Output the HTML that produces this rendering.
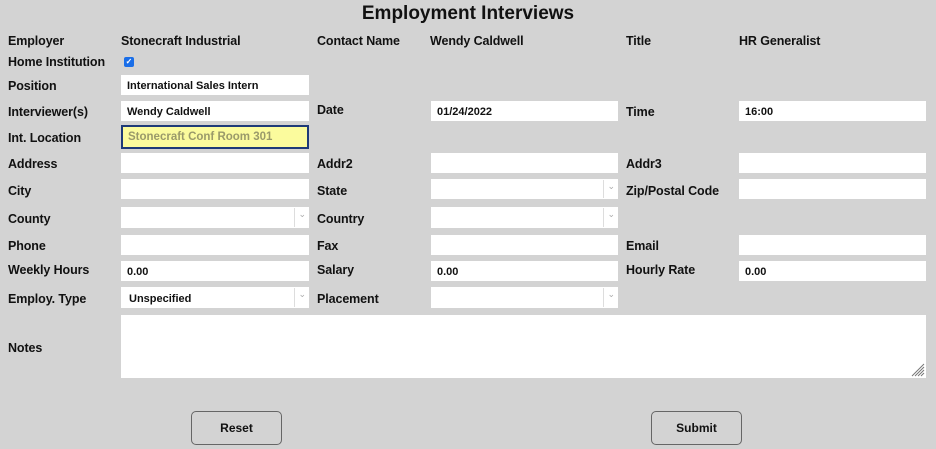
<!DOCTYPE html>
<html><head><meta charset="utf-8"><style>
*{box-sizing:border-box;margin:0;padding:0}
body{width:936px;height:449px;background:#d3d3d3;font-family:"Liberation Sans",Arial,sans-serif;position:relative;overflow:hidden;color:#111}
.t{position:absolute;left:0;width:936px;text-align:center;top:3px;font-size:19px;font-weight:bold}
.l{position:absolute;font-size:12.5px;font-weight:bold;white-space:nowrap;letter-spacing:-0.1px;margin-top:1px}
.i{position:absolute;background:#fff;height:20px;font-size:11px;font-weight:bold;padding:5px 0 0 6px;white-space:nowrap}
.c1{left:121px;width:188px}.c2{left:431px;width:187px}.c3{left:739px;width:187px}
.s::after{content:"";position:absolute;right:14px;top:1px;bottom:1px;width:1px;background:#ddd}
.s::before{content:"⌄";position:absolute;right:3px;top:2px;font-size:9px;color:#aaa;font-weight:normal}
.b{position:absolute;top:411px;width:91px;height:34px;border:1px solid #666;border-radius:5px;font-size:12px;font-weight:bold;text-align:center;line-height:32px;background:#d3d3d3}
</style></head><body>
<div class="t">Employment Interviews</div>
<div class="l" style="left:8px;top:33px">Employer</div>
<div class="l" style="left:121px;top:33px">Stonecraft Industrial</div>
<div class="l" style="left:317px;top:33px">Contact Name</div>
<div class="l" style="left:430px;top:33px">Wendy Caldwell</div>
<div class="l" style="left:626px;top:33px">Title</div>
<div class="l" style="left:739px;top:33px">HR Generalist</div>
<div class="l" style="left:8px;top:54px">Home Institution</div>
<div style="position:absolute;left:124px;top:57px;width:10px;height:10px;background:#1a6ee8;border-radius:2px;color:#fff;font-size:8px;line-height:10px;text-align:center;font-weight:bold">✓</div>
<div class="l" style="left:8px;top:78px">Position</div>
<div class="i c1" style="top:75px">International Sales Intern</div>
<div class="l" style="left:8px;top:104px">Interviewer(s)</div>
<div class="i c1" style="top:101px">Wendy Caldwell</div>
<div class="l" style="left:317px;top:102px">Date</div>
<div class="i c2" style="top:101px">01/24/2022</div>
<div class="l" style="left:626px;top:104px">Time</div>
<div class="i c3" style="top:101px">16:00</div>
<div class="l" style="left:8px;top:130px">Int. Location</div>
<div class="i c1" style="top:125px;height:24px;background:#fbfb9d;border:2px solid #1e3a78;color:#9a9a6a;padding:4px 0 0 5px;font-size:11.5px">Stonecraft Conf Room 301</div>
<div class="l" style="left:8px;top:156px">Address</div>
<div class="i c1" style="top:153px"></div>
<div class="l" style="left:317px;top:156px">Addr2</div>
<div class="i c2" style="top:153px"></div>
<div class="l" style="left:626px;top:156px">Addr3</div>
<div class="i c3" style="top:153px"></div>
<div class="l" style="left:8px;top:183px">City</div>
<div class="i c1" style="top:179px"></div>
<div class="l" style="left:317px;top:183px">State</div>
<div class="i c2 s" style="top:179px"></div>
<div class="l" style="left:626px;top:183px">Zip/Postal Code</div>
<div class="i c3" style="top:179px"></div>
<div class="l" style="left:8px;top:211px">County</div>
<div class="i c1 s" style="top:207px;height:21px"></div>
<div class="l" style="left:317px;top:211px">Country</div>
<div class="i c2 s" style="top:207px;height:21px"></div>
<div class="l" style="left:8px;top:238px">Phone</div>
<div class="i c1" style="top:235px"></div>
<div class="l" style="left:317px;top:238px">Fax</div>
<div class="i c2" style="top:235px"></div>
<div class="l" style="left:626px;top:238px">Email</div>
<div class="i c3" style="top:235px"></div>
<div class="l" style="left:8px;top:262px">Weekly Hours</div>
<div class="i c1" style="top:261px">0.00</div>
<div class="l" style="left:317px;top:262px">Salary</div>
<div class="i c2" style="top:261px">0.00</div>
<div class="l" style="left:626px;top:262px">Hourly Rate</div>
<div class="i c3" style="top:261px">0.00</div>
<div class="l" style="left:8px;top:291px">Employ. Type</div>
<div class="i c1 s" style="top:287px;height:21px;padding-left:8px;padding-top:6px">Unspecified</div>
<div class="l" style="left:317px;top:291px">Placement</div>
<div class="i c2 s" style="top:287px;height:21px"></div>
<div class="l" style="left:8px;top:340px">Notes</div>
<div class="i" style="left:121px;width:805px;top:315px;height:63px">
<svg style="position:absolute;right:1px;bottom:1px" width="14" height="14"><path d="M13 1L1 13M13 4L4 13M13 7L7 13M13 10L10 13" stroke="#777" stroke-width="1"/></svg></div>
<div class="b" style="left:191px">Reset</div>
<div class="b" style="left:651px">Submit</div>
</body></html>
